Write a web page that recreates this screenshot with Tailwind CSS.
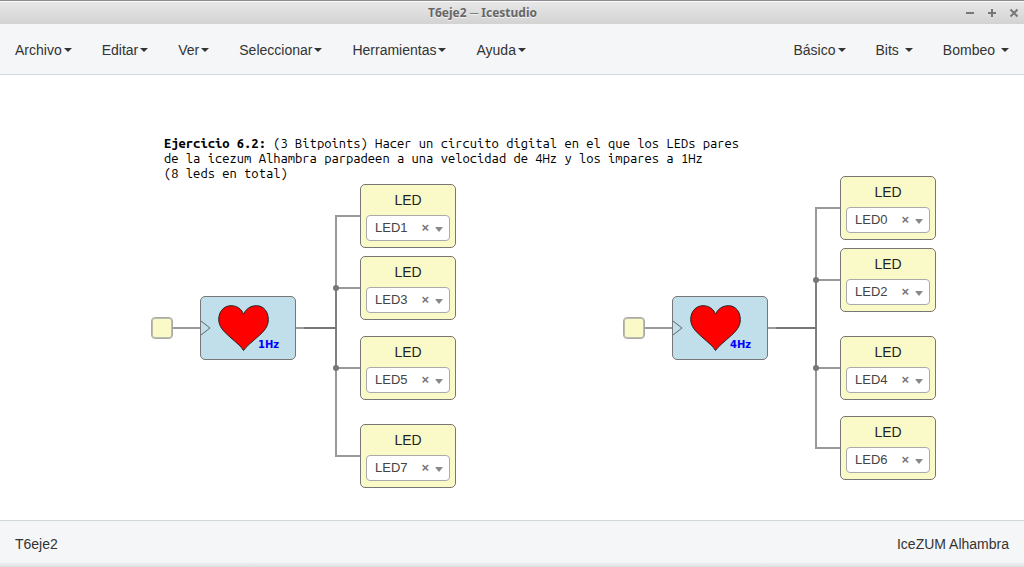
<!DOCTYPE html>
<html lang="es">
<head>
<meta charset="utf-8">
<meta name="viewport" content="width=device-width, initial-scale=1">
<title>T6eje2 ─ Icestudio</title>
<script src="https://cdn.jsdelivr.net/npm/@tailwindcss/browser@4"></script>
</head>
<body class="flex min-h-screen flex-col bg-white font-['Liberation_Sans',Arial,sans-serif] text-sm text-[#333]">

<svg class="hidden" aria-hidden="true">
  <symbol id="caret" viewBox="0 0 8 4"><path d="M0 0H8L4 4Z" fill="currentColor"/></symbol>
  <symbol id="arrow" viewBox="0 0 8 5"><path d="M0 0H8L4 5Z" fill="currentColor"/></symbol>
  <symbol id="clock" viewBox="0 0 10 16"><path d="M0 1L9 8L0 15" fill="none" stroke="#666"/></symbol>
  <symbol id="heart" viewBox="0 0 52 47"><path d="M25.500 45.500C23 41 18 37.500 12 32C5 26 1 21.500 .7 14.500C.7 6.500 6 .7 13 .7C19.500 .7 24 4.500 25.500 9.500C27.500 4.500 32 .7 38.500 .7C45.500 .7 50.300 6.500 50.300 14.500C50.300 21.500 46.500 26 39.500 32C33.500 37.500 28.500 41 25.500 45.500Z" fill="#f00" stroke="#222"/></symbol>
</svg>

<header class="flex h-6 items-center border-t border-[#8f8b91] bg-linear-to-b from-[#e8e8e8] to-[#d3d3d3] pr-[5px] shadow-[inset_0_1px_0_#fafafa]">
  <h1 class="flex-1 pt-px text-center font-['Noto_Sans',sans-serif] text-xs font-bold text-[#666] text-shadow-[0_1px_0_#f4f4f4]">T6eje2 ─ Icestudio</h1>
  <div class="flex gap-3 text-[#777]">
    <button aria-label="Minimizar"><svg class="size-[10px]" viewBox="0 0 10 10"><path d="M1 5H9" stroke="currentColor" stroke-width="2"/></svg></button>
    <button aria-label="Maximizar"><svg class="size-[10px]" viewBox="0 0 10 10"><path d="M1 5H9M5 1V9" stroke="currentColor" stroke-width="2"/></svg></button>
    <button aria-label="Cerrar"><svg class="size-[10px]" viewBox="0 0 10 10"><path d="M1.500 1.500L8.500 8.500M8.500 1.500L1.500 8.500" stroke="currentColor" stroke-width="2"/></svg></button>
  </div>
</header>

<nav class="flex h-[51px] items-stretch justify-between border-b border-[#d5d8da] bg-[#f5f6f8] pt-px">
  <div class="flex">
    <button class="flex items-center gap-[2px] px-[15px]">Archivo<svg class="h-1 w-2"><use href="#caret"/></svg></button>
    <button class="flex items-center gap-[2px] px-[15px]">Editar<svg class="h-1 w-2"><use href="#caret"/></svg></button>
    <button class="flex items-center gap-[2px] px-[15px]">Ver<svg class="h-1 w-2"><use href="#caret"/></svg></button>
    <button class="flex items-center gap-[2px] px-[15px]">Seleccionar<svg class="h-1 w-2"><use href="#caret"/></svg></button>
    <button class="flex items-center gap-[2px] px-[15px]">Herramientas<svg class="h-1 w-2"><use href="#caret"/></svg></button>
    <button class="flex items-center gap-[2px] px-[15px]">Ayuda<svg class="h-1 w-2"><use href="#caret"/></svg></button>
  </div>
  <div class="flex">
    <button class="flex items-center gap-[2px] px-[15px]">Básico<svg class="h-1 w-2"><use href="#caret"/></svg></button>
    <button class="flex items-center gap-[6px] px-[15px]">Bits<svg class="h-1 w-2"><use href="#caret"/></svg></button>
    <button class="flex items-center gap-[6px] px-[15px]">Bombeo<svg class="h-1 w-2"><use href="#caret"/></svg></button>
  </div>
</nav>

<!-- Circuit canvas: nodes are placed freely -->
<main class="relative min-h-[420px] flex-1 overflow-hidden">
  <svg class="absolute inset-0 size-full" fill="none" stroke="#777" stroke-width="2" aria-hidden="true">
    <g stroke-opacity="0.75">
      <path d="M172 253H200"/><path d="M296 253H304"/>
      <path d="M304 253H336V141H360"/><path d="M304 253H336V213H360"/>
      <path d="M304 253H336V293H360"/><path d="M304 253H336V381H360"/>
      <path d="M644 253H672"/><path d="M768 253H776"/>
      <path d="M776 253H816V133H840"/><path d="M776 253H816V205H840"/>
      <path d="M776 253H816V293H840"/><path d="M776 253H816V373H840"/>
    </g>
    <g fill="#777" stroke="none">
      <circle cx="336" cy="213" r="3"/><circle cx="336" cy="293" r="3"/>
      <circle cx="816" cy="205" r="3"/><circle cx="816" cy="293" r="3"/>
    </g>
  </svg>

  <p class="absolute left-[164px] top-[61px] whitespace-nowrap font-['Ubuntu_Mono','DejaVu_Sans_Mono',monospace] text-[13px] leading-[15px] text-black"><b>Ejercicio 6.2:</b> (3 Bitpoints) Hacer un circuito digital en el que los LEDs pares<br>de la icezum Alhambra parpadeen a una velocidad de 4Hz y los impares a 1Hz<br>(8 leds en total)</p>

  <div class="absolute left-[151px] top-[242px] size-[22px] rounded-[4px] border border-[#aaa] bg-[#fafac8] shadow-[inset_0_0_0_1px_#bdbdac]"></div>
  <section class="absolute left-[200px] top-[221px] h-16 w-24 rounded-[5px] border border-[#777] bg-[#c0dfeb]" aria-label="Corazón 1Hz">
    <svg class="absolute left-0 top-[23px] h-4 w-[10px]"><use href="#clock"/></svg>
    <svg class="absolute left-[17px] top-[8px] h-[47px] w-[52px]"><use href="#heart"/></svg>
    <span class="absolute left-[57px] top-[41px] font-['DejaVu_Sans',sans-serif] text-[10px] leading-[14px] font-bold text-[#00f]">1Hz</span>
  </section>

  <div class="absolute left-[623px] top-[242px] size-[22px] rounded-[4px] border border-[#aaa] bg-[#fafac8] shadow-[inset_0_0_0_1px_#bdbdac]"></div>
  <section class="absolute left-[672px] top-[221px] h-16 w-24 rounded-[5px] border border-[#777] bg-[#c0dfeb]" aria-label="Corazón 4Hz">
    <svg class="absolute left-0 top-[23px] h-4 w-[10px]"><use href="#clock"/></svg>
    <svg class="absolute left-[17px] top-[8px] h-[47px] w-[52px]"><use href="#heart"/></svg>
    <span class="absolute left-[57px] top-[41px] font-['DejaVu_Sans',sans-serif] text-[10px] leading-[14px] font-bold text-[#00f]">4Hz</span>
  </section>

  <section class="absolute left-[360px] top-[109px] h-16 w-24 rounded-[5px] border border-[#777] bg-[#fafac8] px-[5px] pt-[5px]">
    <label for="led1" class="block text-center text-[#222]">LED</label>
    <div class="relative mt-[5px]">
      <select id="led1" class="block h-[26px] w-full appearance-none rounded-[4px] border border-[#aaa] bg-white pl-2 text-[13px] text-[#444]"><option>LED1</option></select>
      <button class="absolute right-[21px] top-[5px] text-[13px] leading-4 font-bold text-[#777]" aria-label="Quitar LED1">×</button>
      <svg class="pointer-events-none absolute right-[7px] top-[12px] h-[5px] w-2 text-[#888]"><use href="#arrow"/></svg>
    </div>
  </section>
  <section class="absolute left-[360px] top-[181px] h-16 w-24 rounded-[5px] border border-[#777] bg-[#fafac8] px-[5px] pt-[5px]">
    <label for="led3" class="block text-center text-[#222]">LED</label>
    <div class="relative mt-[5px]">
      <select id="led3" class="block h-[26px] w-full appearance-none rounded-[4px] border border-[#aaa] bg-white pl-2 text-[13px] text-[#444]"><option>LED3</option></select>
      <button class="absolute right-[21px] top-[5px] text-[13px] leading-4 font-bold text-[#777]" aria-label="Quitar LED3">×</button>
      <svg class="pointer-events-none absolute right-[7px] top-[12px] h-[5px] w-2 text-[#888]"><use href="#arrow"/></svg>
    </div>
  </section>
  <section class="absolute left-[360px] top-[261px] h-16 w-24 rounded-[5px] border border-[#777] bg-[#fafac8] px-[5px] pt-[5px]">
    <label for="led5" class="block text-center text-[#222]">LED</label>
    <div class="relative mt-[5px]">
      <select id="led5" class="block h-[26px] w-full appearance-none rounded-[4px] border border-[#aaa] bg-white pl-2 text-[13px] text-[#444]"><option>LED5</option></select>
      <button class="absolute right-[21px] top-[5px] text-[13px] leading-4 font-bold text-[#777]" aria-label="Quitar LED5">×</button>
      <svg class="pointer-events-none absolute right-[7px] top-[12px] h-[5px] w-2 text-[#888]"><use href="#arrow"/></svg>
    </div>
  </section>
  <section class="absolute left-[360px] top-[349px] h-16 w-24 rounded-[5px] border border-[#777] bg-[#fafac8] px-[5px] pt-[5px]">
    <label for="led7" class="block text-center text-[#222]">LED</label>
    <div class="relative mt-[5px]">
      <select id="led7" class="block h-[26px] w-full appearance-none rounded-[4px] border border-[#aaa] bg-white pl-2 text-[13px] text-[#444]"><option>LED7</option></select>
      <button class="absolute right-[21px] top-[5px] text-[13px] leading-4 font-bold text-[#777]" aria-label="Quitar LED7">×</button>
      <svg class="pointer-events-none absolute right-[7px] top-[12px] h-[5px] w-2 text-[#888]"><use href="#arrow"/></svg>
    </div>
  </section>

  <section class="absolute left-[840px] top-[101px] h-16 w-24 rounded-[5px] border border-[#777] bg-[#fafac8] px-[5px] pt-[5px]">
    <label for="led0" class="block text-center text-[#222]">LED</label>
    <div class="relative mt-[5px]">
      <select id="led0" class="block h-[26px] w-full appearance-none rounded-[4px] border border-[#aaa] bg-white pl-2 text-[13px] text-[#444]"><option>LED0</option></select>
      <button class="absolute right-[21px] top-[5px] text-[13px] leading-4 font-bold text-[#777]" aria-label="Quitar LED0">×</button>
      <svg class="pointer-events-none absolute right-[7px] top-[12px] h-[5px] w-2 text-[#888]"><use href="#arrow"/></svg>
    </div>
  </section>
  <section class="absolute left-[840px] top-[173px] h-16 w-24 rounded-[5px] border border-[#777] bg-[#fafac8] px-[5px] pt-[5px]">
    <label for="led2" class="block text-center text-[#222]">LED</label>
    <div class="relative mt-[5px]">
      <select id="led2" class="block h-[26px] w-full appearance-none rounded-[4px] border border-[#aaa] bg-white pl-2 text-[13px] text-[#444]"><option>LED2</option></select>
      <button class="absolute right-[21px] top-[5px] text-[13px] leading-4 font-bold text-[#777]" aria-label="Quitar LED2">×</button>
      <svg class="pointer-events-none absolute right-[7px] top-[12px] h-[5px] w-2 text-[#888]"><use href="#arrow"/></svg>
    </div>
  </section>
  <section class="absolute left-[840px] top-[261px] h-16 w-24 rounded-[5px] border border-[#777] bg-[#fafac8] px-[5px] pt-[5px]">
    <label for="led4" class="block text-center text-[#222]">LED</label>
    <div class="relative mt-[5px]">
      <select id="led4" class="block h-[26px] w-full appearance-none rounded-[4px] border border-[#aaa] bg-white pl-2 text-[13px] text-[#444]"><option>LED4</option></select>
      <button class="absolute right-[21px] top-[5px] text-[13px] leading-4 font-bold text-[#777]" aria-label="Quitar LED4">×</button>
      <svg class="pointer-events-none absolute right-[7px] top-[12px] h-[5px] w-2 text-[#888]"><use href="#arrow"/></svg>
    </div>
  </section>
  <section class="absolute left-[840px] top-[341px] h-16 w-24 rounded-[5px] border border-[#777] bg-[#fafac8] px-[5px] pt-[5px]">
    <label for="led6" class="block text-center text-[#222]">LED</label>
    <div class="relative mt-[5px]">
      <select id="led6" class="block h-[26px] w-full appearance-none rounded-[4px] border border-[#aaa] bg-white pl-2 text-[13px] text-[#444]"><option>LED6</option></select>
      <button class="absolute right-[21px] top-[5px] text-[13px] leading-4 font-bold text-[#777]" aria-label="Quitar LED6">×</button>
      <svg class="pointer-events-none absolute right-[7px] top-[12px] h-[5px] w-2 text-[#888]"><use href="#arrow"/></svg>
    </div>
  </section>
</main>

<footer class="flex h-[47px] items-center justify-between border-t border-[#d0d7da] bg-[#f5f6f8] bg-linear-to-b from-[#f5f6f8] from-88% to-[#dededd] px-[15px]">
  <span>T6eje2</span>
  <span>IceZUM Alhambra</span>
</footer>
</body>
</html>
